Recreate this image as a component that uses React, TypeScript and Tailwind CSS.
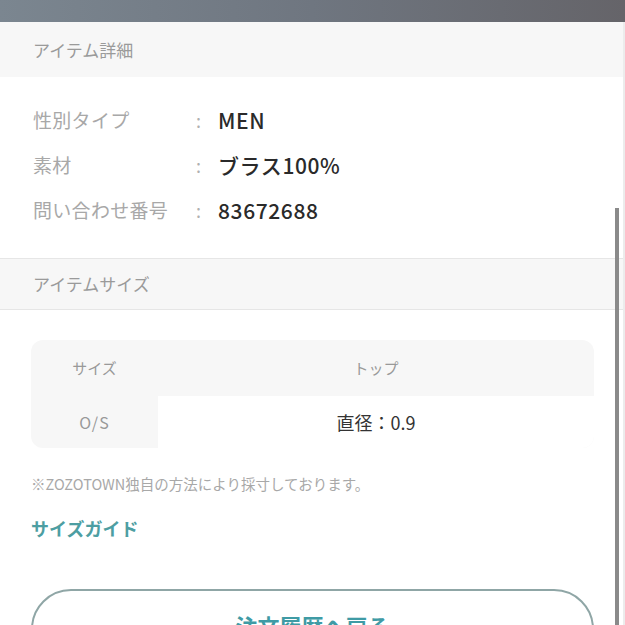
export default function App() {
  const details = [
    { label: "性別タイプ", value: "MEN" },
    { label: "素材", value: "ブラス100%" },
    { label: "問い合わせ番号", value: "83672688" },
  ];

  return (
    <div
      className="relative h-[625px] w-[625px] overflow-hidden bg-white"
      style={{ fontFamily: '"Noto Sans CJK JP", "Noto Sans", sans-serif' }}
    >
      <div className="h-[22px] bg-gradient-to-r from-[#7b8690] via-[#6f7680] to-[#656469]" />

      <div className="flex h-[55px] items-center bg-[#f7f7f7] px-[33px] text-[17px] text-[#9a9a9a]">
        アイテム詳細
      </div>

      <div className="flex flex-col gap-[18px] px-[33px] pt-[30px] pb-[34px]">
        {details.map((d) => (
          <div key={d.label} className="flex h-[27px] items-center">
            <span className="w-[163px] text-[19px] tracking-[0.3px] text-[#a8a8a8]">{d.label}</span>
            <span className="w-[22px] text-[18px] text-[#b0b0b0]">:</span>
            <span className="text-[21px] font-medium tracking-[0.6px] text-[#2a2a2a]">{d.value}</span>
          </div>
        ))}
      </div>

      <div className="flex h-[52px] items-center border-y border-[#e6e6e6] bg-[#f7f7f7] px-[33px] text-[17px] text-[#9a9a9a]">
        アイテムサイズ
      </div>

      <div className="px-[31px] pt-[30px]">
        <div className="overflow-hidden rounded-[12px] bg-[#f7f7f7]">
          <div className="flex h-[56px] items-center text-[15px] text-[#999]">
            <span className="w-[127px] text-center">サイズ</span>
            <span className="flex-1 text-center">トップ</span>
          </div>
          <div className="flex h-[52px] items-center">
            <span className="w-[127px] text-center text-[16px] tracking-[1px] text-[#999]">O/S</span>
            <span className="flex h-full flex-1 items-center justify-center bg-white text-[18px] text-[#333]">
              直径：0.9
            </span>
          </div>
        </div>
      </div>

      <div className="px-[31px] pt-[25px] text-[14.5px] text-[#a8a8a8]">
        ※ZOZOTOWN独自の方法により採寸しております。
      </div>

      <div className="px-[31px] pt-[20px] text-[18px] font-bold text-[#4d9ea2]">サイズガイド</div>

      <div className="px-[31px] pt-[47px]">
        <div className="flex h-[80px] justify-center rounded-[40px] border-2 border-[#8fa6a6] pt-[18px] text-[22px] font-bold text-[#3f9ba5]">
          注文履歴へ戻る
        </div>
      </div>

      <div className="absolute right-[6px] top-[208px] h-[417px] w-[4px] bg-[#8a8a8a]" />
      <div className="absolute right-0 top-[22px] h-[603px] w-[2px] bg-[#ececec]" />
    </div>
  );
}
